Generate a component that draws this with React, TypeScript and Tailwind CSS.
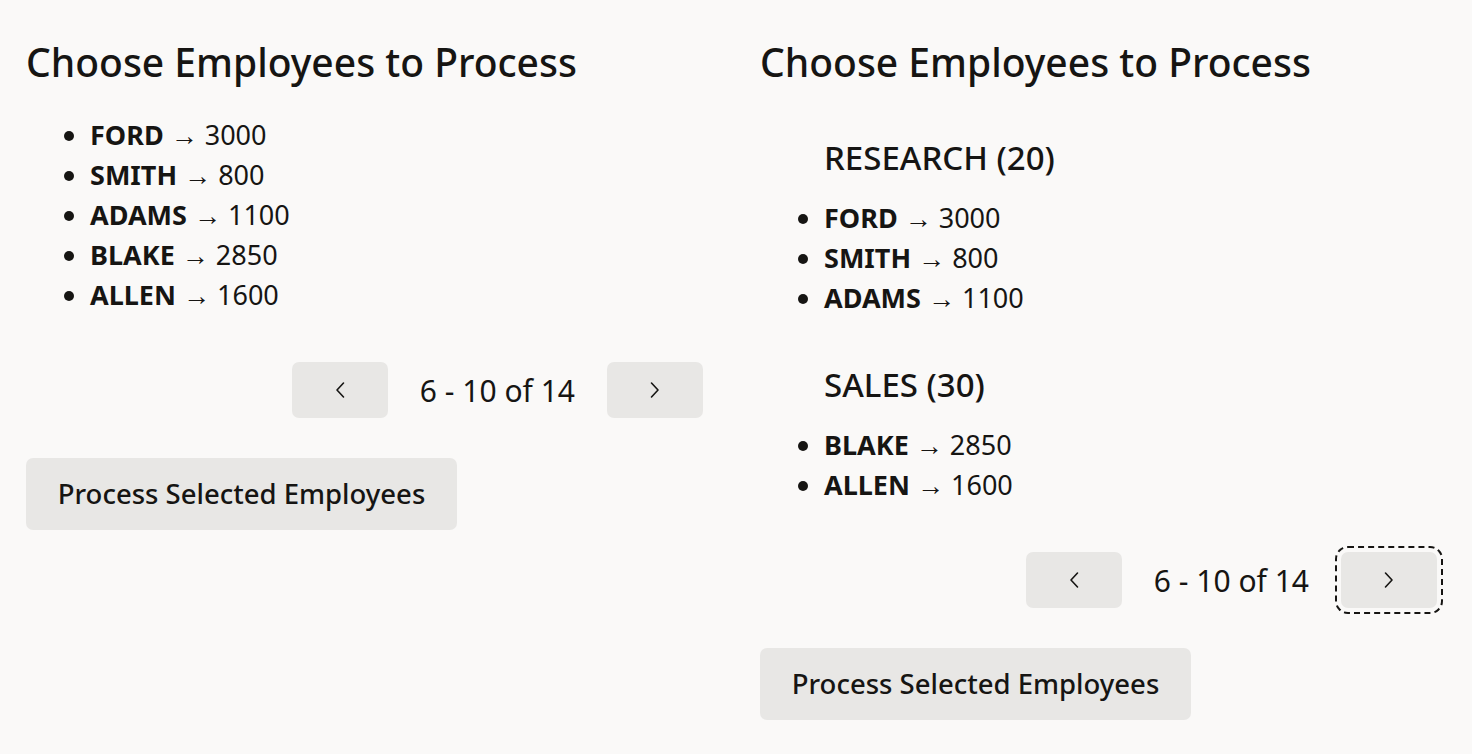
import React from 'react';

type Emp = { name: string; sal: number };

const flat: Emp[] = [
  { name: 'FORD', sal: 3000 },
  { name: 'SMITH', sal: 800 },
  { name: 'ADAMS', sal: 1100 },
  { name: 'BLAKE', sal: 2850 },
  { name: 'ALLEN', sal: 1600 },
];

const groups = [
  { dept: 'RESEARCH (20)', emps: flat.slice(0, 3) },
  { dept: 'SALES (30)', emps: flat.slice(3) },
];

function Chevron({ dir }: { dir: 'left' | 'right' }) {
  return (
    <svg width="12" height="18" viewBox="0 0 12 18" fill="none" stroke="#161513" strokeWidth="1.6" strokeLinecap="round" strokeLinejoin="round">
      {dir === 'left' ? <polyline points="9.5,2 3,9 9.5,16" /> : <polyline points="2.5,2 9,9 2.5,16" />}
    </svg>
  );
}

function EmpList({ emps }: { emps: Emp[] }) {
  return (
    <ul className="list-disc pl-[64px] text-[27px] leading-[40px]">
      {emps.map(e => (
        <li key={e.name}>
          <span className="font-bold">{e.name}</span> → {e.sal}
        </li>
      ))}
    </ul>
  );
}

function Pager({ focused }: { focused?: boolean }) {
  return (
    <div className="flex items-center justify-end gap-8">
      <button className="w-[96px] h-[56px] rounded-[7px] bg-[#e8e7e5] flex items-center justify-center">
        <Chevron dir="left" />
      </button>
      <span className="text-[30px]">6 - 10 of 14</span>
      <button
        className={
          'w-[96px] h-[56px] rounded-[7px] bg-[#e8e7e5] flex items-center justify-center ' +
          (focused ? 'outline-2 outline-dashed outline-[#161513] outline-offset-[4px]' : '')
        }
      >
        <Chevron dir="right" />
      </button>
    </div>
  );
}

function ProcessButton() {
  return (
    <button className="h-[72px] w-[431px] rounded-[7px] bg-[#e8e7e5] text-[27.5px] font-medium">
      Process Selected Employees
    </button>
  );
}

export default function App() {
  return (
    <div
      className="min-h-[754px] bg-[#faf9f8] text-[#161513] pl-[26px] grid grid-cols-[677px_677px] gap-[57px]"
      style={{ fontFamily: '"Noto Sans", sans-serif' }}
    >
      <div className="flex flex-col items-start">
        <h1 className="mt-[36px] text-[39px] leading-[52px] font-medium">Choose Employees to Process</h1>
        <div className="mt-[27px] self-stretch">
          <EmpList emps={flat} />
        </div>
        <div className="mt-[47px] self-stretch">
          <Pager />
        </div>
        <div className="mt-[40px]">
          <ProcessButton />
        </div>
      </div>
      <div className="flex flex-col items-start">
        <h1 className="mt-[36px] text-[39px] leading-[52px] font-medium">Choose Employees to Process</h1>
        <div className="mt-[48px] self-stretch">
          {groups.map((g, i) => (
            <div key={g.dept} className={i > 0 ? 'mt-[45px]' : ''}>
              <div className="pl-[64px] text-[33px] leading-[44px] font-medium">{g.dept}</div>
              <div className="mt-[18px]">
                <EmpList emps={g.emps} />
              </div>
            </div>
          ))}
        </div>
        <div className="mt-[47px] self-stretch">
          <Pager focused />
        </div>
        <div className="mt-[40px]">
          <ProcessButton />
        </div>
      </div>
    </div>
  );
}
